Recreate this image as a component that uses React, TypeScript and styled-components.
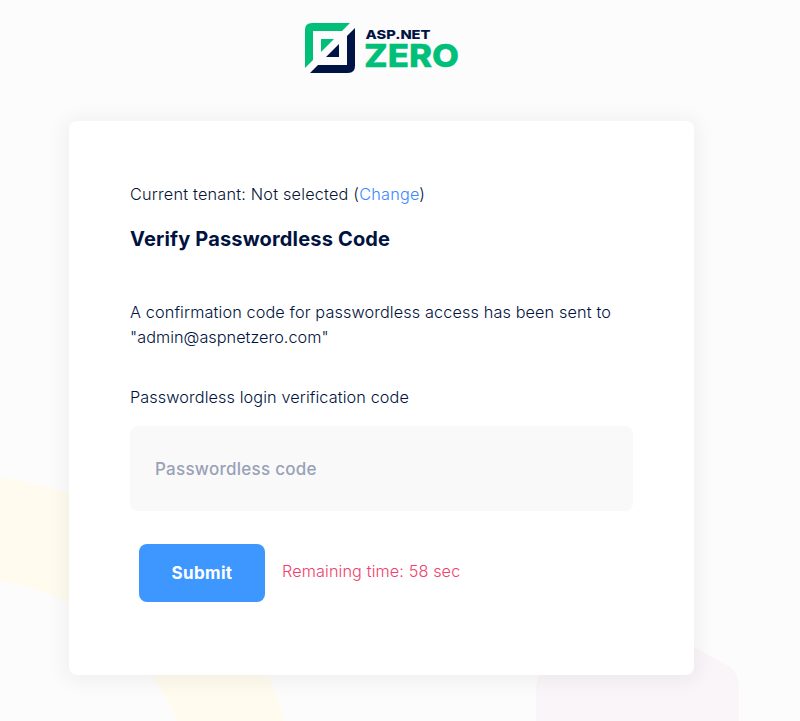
import React from "react";
import styled, { createGlobalStyle } from "styled-components";

const GlobalStyle = createGlobalStyle`
  * { box-sizing: border-box; }
  body {
    margin: 0;
    background: #fcfcfc;
    font-family: Inter, "Liberation Sans", sans-serif;
    font-size: 16.25px;
    font-weight: 300;
    line-height: 25px;
    color: #071437;
  }
`;

const Page = styled.div`
  position: relative;
  width: 800px;
  height: 721px;
  overflow: hidden;
`;

const Backdrop = styled.svg`
  position: absolute;
  inset: 0;
`;

const Content = styled.main`
  position: relative;
  display: flex;
  flex-direction: column;
  align-items: center;
  width: 625px;
  margin-left: 69px;
  padding-top: 20px;
`;

const Logo = styled.svg`
  display: block;
  margin-bottom: 46px;
`;

const Card = styled.form`
  width: 625px;
  height: 554px;
  padding: 61px 61px 0;
  background: #fff;
  border-radius: 8px;
  box-shadow: 0 2px 20px 5px rgba(0, 0, 0, 0.05);
`;

const Tenant = styled.div`
  letter-spacing: 0.2px;
`;

const Link = styled.a`
  color: #3e86ff;
  text-decoration: none;
`;

const Title = styled.h1`
  margin: 20px 0 49px;
  font-size: 20px;
  font-weight: 700;
  line-height: 24px;
  letter-spacing: 0.17px;
  color: #001240;
`;

const Message = styled.p`
  margin: 0 0 35px;
  letter-spacing: 0.12px;
  color: #001240;
`;

const Email = styled.span`
  letter-spacing: 0.03px;
`;

const Label = styled.label`
  display: block;
  margin-bottom: 16px;
  letter-spacing: 0.1px;
  color: #001240;
`;

const CodeInput = styled.input`
  display: block;
  width: 503px;
  height: 85px;
  padding: 0 25px;
  border: 0;
  border-radius: 8px;
  background: #f9f9f9;
  font: 500 17px Inter, sans-serif;
  letter-spacing: 0.26px;
  color: #5e6278;
  outline: none;
  &::placeholder {
    color: #99a1b7;
    opacity: 1;
  }
`;

const Actions = styled.div`
  display: flex;
  align-items: center;
  gap: 17px;
  padding: 33px 0 0 9px;
`;

const Submit = styled.button`
  width: 126px;
  height: 58px;
  padding: 0;
  border: 0;
  border-radius: 8px;
  background: #3e97ff;
  color: #fff;
  font: 700 17px Inter, sans-serif;
  letter-spacing: 0.35px;
`;

const Remaining = styled.span`
  padding-bottom: 3px;
  letter-spacing: 0.1px;
  color: #f1416c;
`;

const LogoName = styled.text`
  font-family: Inter, sans-serif;
  font-size: 12.4px;
  font-weight: 800;
  fill: #001345;
`;

const LogoZero = styled.text`
  font-family: Inter, sans-serif;
  font-size: 31.5px;
  font-weight: 800;
  fill: #00bf78;
  stroke: #00bf78;
  stroke-width: 0.4px;
`;

export default function App() {
  return (
    <Page>
      <GlobalStyle />
      <Backdrop width="800" height="721" viewBox="0 0 800 721" aria-hidden="true">
        <circle cx="-38.5" cy="811.6" r="285" fill="none" stroke="#fffbef" strokeWidth="102" />
        <path
          d="M536 900V690Q536 675 549 667L622 625Q638 616 654 625L728 666Q739 673 739 687V900Z"
          fill="#faf5f8"
        />
      </Backdrop>
      <Content>
        <Logo width="155" height="55" viewBox="304 20 155 55" role="img" aria-label="ASP.NET Zero">
          <path d="M305 68V30Q305 23 312 23H350L342 31H313V60Z" fill="#00bf78" />
          <path d="M355 28V66Q355 73 348 73H310L318 65H347V36Z" fill="#001345" />
          <path d="M321 39H334L321 52Z" fill="#00bf78" />
          <path d="M339 44V57H326Z" fill="#001345" />
          <LogoName x="365.5" y="38.5" textLength="65" lengthAdjust="spacingAndGlyphs">
            ASP.NET
          </LogoName>
          <LogoZero x="364" y="66.7" textLength="95" lengthAdjust="spacingAndGlyphs">
            ZERO
          </LogoZero>
        </Logo>
        <Card onSubmit={(event) => event.preventDefault()}>
          <Tenant>
            Current tenant: Not selected (<Link href="#">Change</Link>)
          </Tenant>
          <Title>Verify Passwordless Code</Title>
          <Message>
            A confirmation code for passwordless access has been sent to{" "}
            <Email>"admin@aspnetzero.com"</Email>
          </Message>
          <Label htmlFor="code">Passwordless login verification code</Label>
          <CodeInput id="code" placeholder="Passwordless code" />
          <Actions>
            <Submit type="submit">Submit</Submit>
            <Remaining>Remaining time: 58 sec</Remaining>
          </Actions>
        </Card>
      </Content>
    </Page>
  );
}
